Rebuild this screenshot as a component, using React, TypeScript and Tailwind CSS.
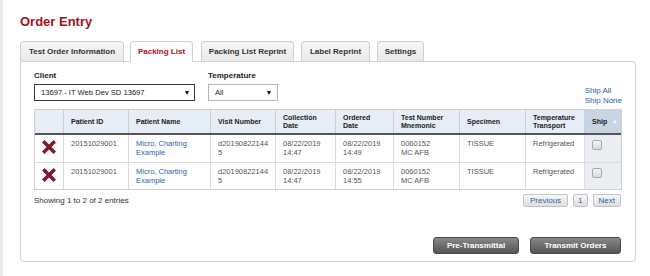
import React from "react";

const cols = [29, 65, 82, 65, 60, 58, 66, 66, 59, 36];

function XIcon() {
  return (
    <svg width="14" height="14" viewBox="0 0 14 14">
      <path
        d="M2.5 0 L7 4.5 L11.5 0 L14 2.5 L9.5 7 L14 11.5 L11.5 14 L7 9.5 L2.5 14 L0 11.5 L4.5 7 L0 2.5 Z"
        fill="#7d1b2c"
      />
    </svg>
  );
}

function Checkbox() {
  return (
    <div className="h-[10px] w-[10px] rounded-[2px] border border-[#a9a9a9] bg-gradient-to-b from-[#f4f4f4] to-[#dadada]" />
  );
}

const tabs = [
  { label: "Test Order Information", active: false, w: "w-[104px]", ml: "ml-0" },
  { label: "Packing List", active: true, w: "w-[63px]", ml: "ml-[6px]" },
  { label: "Packing List Reprint", active: false, w: "w-[93px]", ml: "ml-[8px]" },
  { label: "Label Reprint", active: false, w: "w-[69px]", ml: "ml-[7px]" },
  { label: "Settings", active: false, w: "w-[47px]", ml: "ml-[7px]" },
];

const headers: React.ReactNode[] = [
  "",
  "Patient ID",
  "Patient Name",
  "Visit Number",
  <>Collection<br />Date</>,
  <>Ordered<br />Date</>,
  <>Test Number<br />Mnemonic</>,
  "Specimen",
  <>Temperature<br />Transport</>,
];

const rows = [{ ordered: "14:49" }, { ordered: "14:55" }];

export default function App() {
  return (
    <div className="flex h-[276px] w-[650px] bg-white font-['Liberation_Sans',Arial,sans-serif] text-[#333]">
      <div className="w-[3px] shrink-0 bg-[#e9e9ef]" />
      <div className="pl-[17px] pt-[14px]">
        <h1 className="text-[13px] font-bold leading-[16px] text-[#a3121c]">Order Entry</h1>

        <div className="relative z-10 mt-[11px] flex h-[21px] items-start">
          {tabs.map((t) =>
            t.active ? (
              <div
                key={t.label}
                className={`${t.w} ${t.ml} flex h-[21px] items-center justify-center whitespace-nowrap rounded-t-[4px] border border-b-0 border-[#cfcfcf] bg-white text-[8px] font-bold text-[#a3121c]`}
              >
                {t.label}
              </div>
            ) : (
              <div
                key={t.label}
                className={`${t.w} ${t.ml} flex h-[20px] items-center justify-center whitespace-nowrap rounded-t-[4px] border border-b-0 border-[#cfcfcf] bg-gradient-to-b from-[#f7f7f7] to-[#e9e9e9] text-[8px] font-bold text-[#333]`}
              >
                {t.label}
              </div>
            )
          )}
        </div>

        <div className="-mt-px h-[201px] w-[616px] rounded-[4px] rounded-tl-none border border-[#d2d2d2] pl-[13px] pt-[9px]">
          {/* filters */}
          <div className="flex h-[38px] w-[588px]">
            <div className="w-[161px]">
              <div className="text-[8px] font-bold leading-[10px] text-[#222]">Client</div>
              <div className="mt-[3px] flex h-[17px] w-[161px] items-center justify-between border border-[#3a3a3a] pl-[6px] pr-[5px] text-[7.6px] text-[#222]">
                <span>13697 - IT Web Dev SD 13697</span>
                <span className="h-0 w-0 border-l-[2.5px] border-r-[2.5px] border-t-[4px] border-l-transparent border-r-transparent border-t-[#111]" />
              </div>
            </div>
            <div className="ml-[13px] w-[70px]">
              <div className="text-[8px] font-bold leading-[10px] text-[#222]">Temperature</div>
              <div className="mt-[3px] flex h-[17px] w-[70px] items-center justify-between border border-[#b5b5b5] pl-[6px] pr-[6px] text-[7.6px] text-[#222]">
                <span>All</span>
                <span className="h-0 w-0 border-l-[2.5px] border-r-[2.5px] border-t-[4px] border-l-transparent border-r-transparent border-t-[#111]" />
              </div>
            </div>
            <div className="mb-[3px] ml-auto self-end text-[8px] leading-[10px] text-[#2d5fab]">
              <div>Ship All</div>
              <div>Ship None</div>
            </div>
          </div>

          {/* table */}
          <div className="w-[588px] border border-[#cfcfcf]">
            <div className="flex h-[25px] border-b-2 border-[#555]">
              {headers.map((h, i) => (
                <div
                  key={i}
                  style={{ width: cols[i] }}
                  className="flex items-center border-r border-[#cfcfcf] bg-[#e5edf7] pl-[7px] text-[7px] font-bold leading-[8px] text-[#222]"
                >
                  {h}
                </div>
              ))}
              <div
                style={{ width: cols[9] }}
                className="flex items-center bg-[#c6d4e3] pl-[7px] text-[7px] font-bold leading-[8px] text-[#222]"
              >
                Ship
                <span className="ml-[6px] h-0 w-0 border-b-[3px] border-l-[2.5px] border-r-[2.5px] border-b-white border-l-transparent border-r-transparent" />
              </div>
            </div>
            {rows.map((r, ri) => (
              <div
                key={ri}
                className={
                  ri === 0
                    ? "flex h-[28px] border-b border-[#dcdcdc] text-[7.5px] leading-[9px] text-[#555]"
                    : "flex h-[26px] text-[7.5px] leading-[9px] text-[#555]"
                }
              >
                <div style={{ width: cols[0] }} className="flex justify-center border-r border-[#dcdcdc] pt-[5px]">
                  <XIcon />
                </div>
                <div style={{ width: cols[1] }} className="border-r border-[#dcdcdc] pl-[7px] pt-[4px]">
                  20151029001
                </div>
                <div style={{ width: cols[2] }} className="border-r border-[#dcdcdc] pl-[7px] pt-[4px] text-[#2d5fab]">
                  Micro, Charting
                  <br />
                  Example
                </div>
                <div style={{ width: cols[3] }} className="border-r border-[#dcdcdc] pl-[7px] pt-[4px]">
                  d20190822144
                  <br />5
                </div>
                <div style={{ width: cols[4] }} className="border-r border-[#dcdcdc] pl-[7px] pt-[4px]">
                  08/22/2019
                  <br />
                  14:47
                </div>
                <div style={{ width: cols[5] }} className="border-r border-[#dcdcdc] pl-[7px] pt-[4px]">
                  08/22/2019
                  <br />
                  {r.ordered}
                </div>
                <div style={{ width: cols[6] }} className="border-r border-[#dcdcdc] pl-[7px] pt-[4px]">
                  0060152
                  <br />
                  MC AFB
                </div>
                <div style={{ width: cols[7] }} className="border-r border-[#dcdcdc] pl-[7px] pt-[4px]">
                  TISSUE
                </div>
                <div style={{ width: cols[8] }} className="border-r border-[#dcdcdc] pl-[7px] pt-[4px]">
                  Refrigerated
                </div>
                <div style={{ width: cols[9] }} className="bg-[#eaeef3] pl-[7px] pt-[5px]">
                  <Checkbox />
                </div>
              </div>
            ))}
          </div>

          {/* info + pagination */}
          <div className="mt-[4px] flex h-[13px] w-[588px] items-center justify-between">
            <span className="text-[8px] text-[#333]">Showing 1 to 2 of 2 entries</span>
            <div className="flex gap-[5px] pr-[1px] text-[8px] text-[#2d5fab]">
              <span className="flex h-[13px] items-center rounded-[2px] border border-[#c4c4c4] bg-gradient-to-b from-[#f8f8f8] to-[#dedede] px-[6px]">
                Previous
              </span>
              <span className="flex h-[13px] items-center rounded-[2px] border border-[#c4c4c4] bg-gradient-to-b from-[#f8f8f8] to-[#dedede] px-[4px]">
                1
              </span>
              <span className="flex h-[13px] items-center rounded-[2px] border border-[#c4c4c4] bg-gradient-to-b from-[#f8f8f8] to-[#dedede] px-[5px]">
                Next
              </span>
            </div>
          </div>

          {/* actions */}
          <div className="mt-[30px] flex w-[588px] justify-end gap-[11px] pr-[1px]">
            <button className="flex h-[17px] w-[86px] items-center justify-center rounded-[3px] border border-[#4a4a4a] bg-gradient-to-b from-[#888] to-[#555] text-[8px] font-bold text-white">
              Pre-Transmittal
            </button>
            <button className="flex h-[17px] w-[91px] items-center justify-center rounded-[3px] border border-[#4a4a4a] bg-gradient-to-b from-[#888] to-[#555] text-[8px] font-bold text-white">
              Transmit Orders
            </button>
          </div>
        </div>
      </div>
    </div>
  );
}
